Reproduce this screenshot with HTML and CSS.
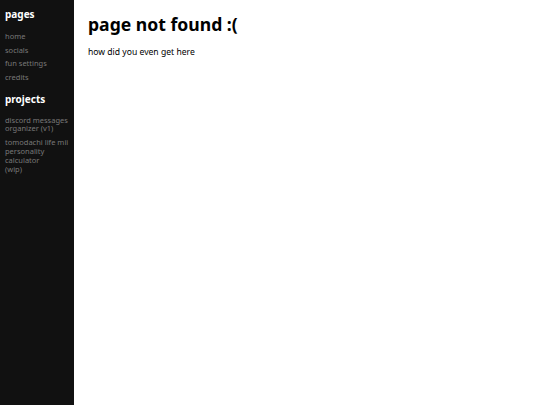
FILE: index.html
```html
<!DOCTYPE html>
<html>
<head>
<meta charset="utf-8">
<link rel="stylesheet" href="styles.css">
</head>
<body>
<div class="layout">
  <nav class="sidebar">
    <h2 class="nav-title">pages</h2>
    <ul class="nav-list">
      <li><a href="#">home</a></li>
      <li><a href="#">socials</a></li>
      <li><a href="#">fun settings</a></li>
      <li><a href="#">credits</a></li>
    </ul>
    <h2 class="nav-title">projects</h2>
    <ul class="nav-list projects">
      <li><a href="#">discord messages organizer (v1)</a></li>
      <li><a href="#">tomodachi life mii personality calculator<br>(wip)</a></li>
    </ul>
  </nav>
  <main class="content">
    <h1 class="title">page not found :(</h1>
    <p class="text">how did you even get here</p>
  </main>
</div>
</body>
</html>
```
FILE: styles.css
```css
html, body {
  margin: 0;
  padding: 0;
  height: 100%;
}
body {
  font-family: "Noto Sans", sans-serif;
  background: #fff;
  color: #000;
}
.layout {
  display: flex;
  min-height: 100%;
}
.sidebar {
  box-sizing: border-box;
  width: 74px;
  flex: none;
  background: #111111;
  padding: 7px 3px 0 5px;
}
.nav-title {
  margin: 0;
  color: #fff;
  font-size: 10px;
  font-weight: 700;
  line-height: 14px;
}
.nav-list {
  list-style: none;
  display: flex;
  flex-direction: column;
  gap: 3.7px;
  margin: 10px 0 10px;
  padding: 0;
}
.nav-list li {
  font-size: 7.5px;
  line-height: 10px;
}
.nav-list.projects {
  margin-top: 9.5px;
  gap: 5px;
}
.nav-list.projects li {
  line-height: 8.8px;
}
.nav-list a {
  color: #787878;
  text-decoration: none;
}
.content {
  flex: 1;
  padding: 13px 14px;
}
.title {
  margin: 0;
  font-size: 17.6px;
  font-weight: 700;
  line-height: 22px;
}
.text {
  margin: 10.5px 0 0;
  font-size: 8.6px;
  line-height: 12px;
}
```
